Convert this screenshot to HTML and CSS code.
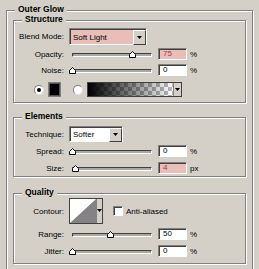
FILE: index.html
```html
<!DOCTYPE html>
<html>
<head>
<meta charset="utf-8">
<link rel="stylesheet" href="styles.css">
</head>
<body>
<div class="group outer">
  <div class="title">Outer Glow</div>

  <div class="group sub structure">
    <div class="title">Structure</div>
    <div class="row r-blend">
      <span class="label">Blend Mode:</span>
      <div class="select pink w-blend">
        <span class="sel-text">Soft Light</span>
        <span class="dd"><svg width="5" height="3" viewBox="0 0 5 3"><path d="M0 0H5L2.5 3Z" fill="#000"/></svg></span>
      </div>
    </div>
    <div class="row r-opacity">
      <span class="label">Opacity:</span>
      <div class="slider"><div class="track"></div><svg class="thumb" style="left:57px" width="7" height="7" viewBox="0 0 7 7"><path d="M0.5 6.5V3.5L3.5 0.5L6.5 3.5V6.5Z" fill="#fff" stroke="#000"/></svg></div>
      <div class="field pink">75</div><span class="unit">%</span>
    </div>
    <div class="row r-noise">
      <span class="label">Noise:</span>
      <div class="slider"><div class="track"></div><svg class="thumb" style="left:-3px" width="7" height="7" viewBox="0 0 7 7"><path d="M0.5 6.5V3.5L3.5 0.5L6.5 3.5V6.5Z" fill="#fff" stroke="#000"/></svg></div>
      <div class="field">0</div><span class="unit">%</span>
    </div>
    <div class="row r-color">
      <span class="radio checked"></span>
      <span class="swatch"></span>
      <span class="radio r2"></span>
      <div class="gradient"><span class="grad-fill"></span><span class="grad-dd"><svg width="5" height="3" viewBox="0 0 5 3"><path d="M0 0H5L2.5 3Z" fill="#000"/></svg></span></div>
    </div>
  </div>

  <div class="group sub elements">
    <div class="title">Elements</div>
    <div class="row r-tech">
      <span class="label">Technique:</span>
      <div class="select w-tech">
        <span class="sel-text">Softer</span>
        <span class="dd"><svg width="5" height="3" viewBox="0 0 5 3"><path d="M0 0H5L2.5 3Z" fill="#000"/></svg></span>
      </div>
    </div>
    <div class="row r-spread">
      <span class="label">Spread:</span>
      <div class="slider"><div class="track"></div><svg class="thumb" style="left:-3px" width="7" height="7" viewBox="0 0 7 7"><path d="M0.5 6.5V3.5L3.5 0.5L6.5 3.5V6.5Z" fill="#fff" stroke="#000"/></svg></div>
      <div class="field">0</div><span class="unit">%</span>
    </div>
    <div class="row r-size">
      <span class="label">Size:</span>
      <div class="slider"><div class="track"></div><svg class="thumb" style="left:0px" width="7" height="7" viewBox="0 0 7 7"><path d="M0.5 6.5V3.5L3.5 0.5L6.5 3.5V6.5Z" fill="#fff" stroke="#000"/></svg></div>
      <div class="field pink">4</div><span class="unit">px</span>
    </div>
  </div>

  <div class="group sub quality">
    <div class="title">Quality</div>
    <div class="row r-contour">
      <span class="label">Contour:</span>
      <div class="contour">
        <svg class="contour-prev" width="26" height="24" viewBox="0 0 26 24"><rect width="26" height="24" fill="#fff"/><path d="M0 24L26 0V24Z" fill="#848284"/></svg>
        <span class="contour-dd"><svg width="5" height="3" viewBox="0 0 5 3"><path d="M0 0H5L2.5 3Z" fill="#000"/></svg></span>
      </div>
      <span class="check"></span>
      <span class="check-label">Anti-aliased</span>
    </div>
    <div class="row r-range">
      <span class="label">Range:</span>
      <div class="slider"><div class="track"></div><svg class="thumb" style="left:35px" width="7" height="7" viewBox="0 0 7 7"><path d="M0.5 6.5V3.5L3.5 0.5L6.5 3.5V6.5Z" fill="#fff" stroke="#000"/></svg></div>
      <div class="field">50</div><span class="unit">%</span>
    </div>
    <div class="row r-jitter">
      <span class="label">Jitter:</span>
      <div class="slider"><div class="track"></div><svg class="thumb" style="left:-3px" width="7" height="7" viewBox="0 0 7 7"><path d="M0.5 6.5V3.5L3.5 0.5L6.5 3.5V6.5Z" fill="#fff" stroke="#000"/></svg></div>
      <div class="field">0</div><span class="unit">%</span>
    </div>
  </div>
</div>
</body>
</html>
```

FILE: styles.css
```css
html, body {
  margin: 0;
  padding: 0;
  background: #d4d0c8;
  overflow: hidden;
}
body {
  font-family: "Liberation Sans", Arial, sans-serif;
  font-size: 8px;
  color: #000;
  width: 259px;
  height: 269px;
}
.group {
  border: 1px solid #808080;
  box-shadow: inset 1px 1px 0 #fff, 1px 1px 0 #fff;
}
.outer {
  margin: 10px 6px 0 6px;
  height: 290px;
}
.title {
  display: block;
  width: max-content;
  margin: -6px 0 0 8px;
  padding: 0 3px;
  height: 10px;
  line-height: 9px;
  font-size: 8.5px;
  font-weight: bold;
  background: #d4d0c8;
}
.sub {
  margin: 0 6px 0 6px;
}
.structure { margin-top: 5px; height: 81px; }
.elements { margin-top: 14px; height: 58px; }
.quality { margin-top: 16px; height: 69px; }

.row {
  display: flex;
  align-items: center;
}
.label {
  width: 50px;
  text-align: right;
  margin-right: 5px;
  white-space: nowrap;
}
.r-blend { margin-top: 3px; height: 17px; }
.r-opacity { margin-top: 3px; height: 12px; }
.r-noise { margin-top: 4px; height: 12px; }
.r-color { margin-top: 6px; height: 15px; }
.r-tech { margin-top: 4px; height: 16px; }
.r-spread { margin-top: 3px; height: 12px; }
.r-size { margin-top: 5px; height: 12px; }
.r-contour { margin-top: 0px; height: 26px; }
.r-range { margin-top: 4px; height: 12px; }
.r-jitter { margin-top: 5px; height: 12px; }

.select {
  position: relative;
  display: flex;
  align-items: center;
  box-sizing: border-box;
  height: 17px;
  background: #fff;
  border-top: 1px solid #808080;
  border-left: 1px solid #808080;
  border-right: 1px solid #fff;
  border-bottom: 1px solid #fff;
  box-shadow: inset 1px 1px 0 #404040;
}
.select.pink { background: #e9bdb8; }
.w-blend { width: 78px; }
.w-tech { width: 54px; height: 16px; }
.sel-text {
  flex: 1;
  padding-left: 3px;
  padding-top: 1px;
}
.dd {
  box-sizing: border-box;
  width: 13px;
  height: 100%;
  display: flex;
  align-items: center;
  justify-content: center;
  background: #d4d0c8;
  border-top: 1px solid #fff;
  border-left: 1px solid #fff;
  border-right: 1px solid #404040;
  border-bottom: 1px solid #404040;
  margin-top: 1px;
}

.slider {
  position: relative;
  width: 80px;
  height: 12px;
  margin-left: 3px;
  align-self: flex-start;
}
.track {
  box-sizing: border-box;
  margin-top: 5px;
  height: 4px;
  width: 80px;
  background: #d4d0c8;
  border-top: 1px solid #404040;
  border-left: 1px solid #404040;
  border-bottom: 1px solid #fff;
  border-right: 1px solid #fff;
  box-shadow: inset 0 0 0 0.5px #808080;
  border-radius: 1px;
}
.thumb {
  position: absolute;
  top: 3px;
}

.field {
  box-sizing: border-box;
  width: 29px;
  height: 12px;
  margin-left: 6px;
  background: #fff;
  border-top: 1px solid #808080;
  border-left: 1px solid #808080;
  border-right: 1px solid #fff;
  border-bottom: 1px solid #fff;
  box-shadow: inset 1px 1px 0 #404040;
  padding-left: 4px;
  line-height: 10px;
}
.field.pink {
  background: #e9bdb8;
  color: #9a4545;
}
.unit {
  margin-left: 3px;
}

.radio {
  box-sizing: border-box;
  width: 10px;
  height: 10px;
  border-radius: 50%;
  background: #fff;
  border: 1px solid #808080;
  border-right-color: #e0e0e0;
  border-bottom-color: #e0e0e0;
  position: relative;
  margin-left: 20px;
}
.radio.checked::after {
  content: "";
  position: absolute;
  left: 2px;
  top: 2px;
  width: 4px;
  height: 4px;
  border-radius: 50%;
  background: #000;
}
.swatch {
  box-sizing: border-box;
  width: 13px;
  height: 15px;
  margin-left: 4px;
  background: #000;
  border: 1px solid #808080;
  box-shadow: inset 0 0 0 1px #505050;
}
.radio.r2 {
  margin-left: 12px;
}
.gradient {
  box-sizing: border-box;
  display: flex;
  width: 95px;
  height: 15px;
  margin-left: 4px;
  border: 1px solid #404040;
  background: #d4d0c8;
}
.grad-fill {
  flex: 1;
  background: linear-gradient(to right, #000 0%, rgba(0,0,0,0) 100%), repeating-conic-gradient(#b8b8b8 0% 25%, #fff 0% 50%) 0 0 / 8px 8px;
}
.grad-dd {
  width: 7px;
  display: flex;
  align-items: center;
  justify-content: center;
  border-left: 1px solid #808080;
  background: #d4d0c8;
}

.contour {
  box-sizing: border-box;
  display: flex;
  width: 34px;
  height: 26px;
  border: 1px solid #404040;
  background: #d4d0c8;
}
.contour-prev {
  display: block;
}
.contour-dd {
  flex: 1;
  display: flex;
  justify-content: center;
  padding-top: 10px;
  border-left: 1px solid #808080;
}
.check {
  box-sizing: border-box;
  width: 10px;
  height: 10px;
  margin-left: 10px;
  background: #fff;
  border-top: 1px solid #808080;
  border-left: 1px solid #808080;
  border-right: 1px solid #fff;
  border-bottom: 1px solid #fff;
  box-shadow: inset 1px 1px 0 #404040;
}
.check-label {
  margin-left: 3px;
}
```
